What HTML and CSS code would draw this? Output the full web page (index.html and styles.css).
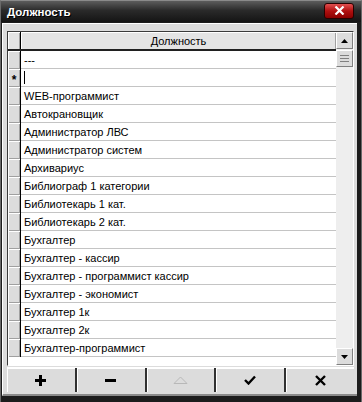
FILE: index.html
```html
<!DOCTYPE html>
<html lang="ru">
  <head>
    <meta charset="UTF-8" />
    <title>Должность</title>
    <link rel="stylesheet" href="styles.css">
  </head>
  <body>
    <div class="window">
      <div class="titlebar">
        <span class="title">Должность</span>
        <button class="close-btn" aria-label="Закрыть">
          <svg width="11" height="9" viewBox="0 0 11 9">
            <path d="M1.5 0.5 L9.5 8.5 M9.5 0.5 L1.5 8.5" stroke="#fff" stroke-width="2.2" />
          </svg>
        </button>
      </div>

      <div class="content">
        <div class="grid">
          <div class="table">
            <div class="row header">
              <div class="ind"></div>
              <div class="cell">Должность</div>
            </div>
            <div class="rows">
              <div class="row"><div class="ind"></div><div class="cell">---</div></div>
              <div class="row"><div class="ind star">*</div><div class="cell"><span class="caret"></span></div></div>
              <div class="row"><div class="ind"></div><div class="cell">WEB-программист</div></div>
              <div class="row"><div class="ind"></div><div class="cell">Автокрановщик</div></div>
              <div class="row"><div class="ind"></div><div class="cell">Администратор ЛВС</div></div>
              <div class="row"><div class="ind"></div><div class="cell">Администратор систем</div></div>
              <div class="row"><div class="ind"></div><div class="cell">Архивариус</div></div>
              <div class="row"><div class="ind"></div><div class="cell">Библиограф 1 категории</div></div>
              <div class="row"><div class="ind"></div><div class="cell">Библиотекарь 1 кат.</div></div>
              <div class="row"><div class="ind"></div><div class="cell">Библиотекарь 2 кат.</div></div>
              <div class="row"><div class="ind"></div><div class="cell">Бухгалтер</div></div>
              <div class="row"><div class="ind"></div><div class="cell">Бухгалтер - кассир</div></div>
              <div class="row"><div class="ind"></div><div class="cell">Бухгалтер - программист кассир</div></div>
              <div class="row"><div class="ind"></div><div class="cell">Бухгалтер - экономист</div></div>
              <div class="row"><div class="ind"></div><div class="cell">Бухгалтер 1к</div></div>
              <div class="row"><div class="ind"></div><div class="cell">Бухгалтер 2к</div></div>
              <div class="row"><div class="ind"></div><div class="cell">Бухгалтер-программист</div></div>
            </div>
          </div>

          <div class="scrollbar">
            <div class="sb-btn">
              <svg width="7" height="4" viewBox="0 0 7 4"><path d="M0 4 L3.5 0 L7 4 Z" fill="#000" /></svg>
            </div>
            <div class="sb-thumb">
              <svg width="9" height="7" viewBox="0 0 9 7">
                <path d="M0 0.5 H9 M0 3.5 H9 M0 6.5 H9" stroke="#808080" stroke-width="1" />
              </svg>
            </div>
            <div class="sb-track"></div>
            <div class="sb-btn">
              <svg width="7" height="4" viewBox="0 0 7 4"><path d="M0 0 L7 0 L3.5 4 Z" fill="#000" /></svg>
            </div>
          </div>
        </div>

        <div class="toolbar">
          <button class="tool">
            <svg width="11" height="11" viewBox="0 0 11 11"><path d="M5.5 0 V11 M0 5.5 H11" stroke="#000" stroke-width="3" /></svg>
          </button>
          <button class="tool">
            <svg width="11" height="3" viewBox="0 0 11 3"><path d="M0 1.5 H11" stroke="#000" stroke-width="3" /></svg>
          </button>
          <button class="tool" disabled>
            <svg width="15" height="8" viewBox="0 0 15 8"><path d="M1 7.5 L7.5 1 L14 7.5 Z" fill="none" stroke="#b8b8b8" stroke-width="1" /></svg>
          </button>
          <button class="tool">
            <svg width="12" height="10" viewBox="0 0 12 10"><path d="M1 5 L4.5 8.5 L11 1.5" fill="none" stroke="#000" stroke-width="2.4" /></svg>
          </button>
          <button class="tool">
            <svg width="11" height="11" viewBox="0 0 11 11"><path d="M1 1 L10 10 M10 1 L1 10" stroke="#000" stroke-width="2.4" /></svg>
          </button>
        </div>
      </div>
    </div>
  </body>
</html>
```

FILE: styles.css
```css
:root {
  --frame: #1c1c1c;
  --face: #dcdcdc;
  --line: #c4c4c4;
  --dark: #3a3a3a;
}
* {
  box-sizing: border-box;
}
body {
  margin: 0;
  background: #000;
  font-family: "Liberation Sans", Arial, sans-serif;
  font-size: 11px;
}
.window {
  width: 362px;
  height: 402px;
  background: var(--frame);
  border-left: 1px solid #6a6a6a;
  border-right: 1px solid #6a6a6a;
  border-top: 1px solid #8a8a8a;
  display: flex;
  flex-direction: column;
}
.titlebar {
  height: 23px;
  display: flex;
  align-items: center;
  justify-content: space-between;
  padding: 0 7px 0 6px;
  background: linear-gradient(#5c5c5c, #2a2a2a 45%, #141414);
}
.title {
  color: #fff;
  font-weight: bold;
  font-size: 11.5px;
  text-shadow: 1px 1px 0 #000;
}
.close-btn {
  width: 30px;
  height: 16px;
  margin-top: -2px;
  border: 1px solid #2a0000;
  border-radius: 3px;
  background: linear-gradient(#e25050, #b01010 50%, #8c0000);
  display: flex;
  align-items: center;
  justify-content: center;
  padding: 0;
}
.content {
  flex: 1;
  margin: 1px 4px 6px 1px;
  background: var(--face);
  border-top: 1px solid #fff;
  border-left: 1px solid #fff;
  padding: 7px 3px 2px 4px;
  display: flex;
  flex-direction: column;
  border-bottom: 2px solid #8a8a8a;
}
.grid {
  display: flex;
  height: 335px;
  border: 1px solid var(--dark);
  border-right-color: #fff;
  border-bottom-color: #fff;
  background: #fff;
}
.table {
  flex: 1;
  display: flex;
  flex-direction: column;
  overflow: hidden;
}
.row {
  display: flex;
  height: 18px;
  flex-shrink: 0;
}
.ind {
  width: 13px;
  border-right: 1px solid #000;
  background: var(--face);
  box-shadow: inset 1px 1px 0 #fff, inset -1px -1px 0 #a0a0a0;
  display: flex;
  align-items: center;
  justify-content: center;
}
.star {
  font-size: 12px;
  font-weight: bold;
  padding-top: 4px;
}
.cell {
  flex: 1;
  border-bottom: 1px solid var(--line);
  padding: 0 0 0 3px;
  display: flex;
  align-items: center;
  color: #000;
}
.header {
  height: 19px;
  border-bottom: 2px solid #202020;
}
.header .ind,
.header .cell {
  background: #e4e4e4;
  box-shadow: inset 1px 1px 0 #fff, inset -1px 0 0 #a0a0a0;
}
.header .cell {
  justify-content: center;
  border-bottom: none;
  padding: 0;
}
.caret {
  width: 1px;
  height: 13px;
  background: #000;
}
.scrollbar {
  width: 17px;
  display: flex;
  flex-direction: column;
  background: #eeeeee;
}
.sb-btn,
.sb-thumb {
  height: 17px;
  background: var(--face);
  border: 1px solid;
  border-color: #fff #808080 #808080 #fff;
  display: flex;
  align-items: center;
  justify-content: center;
}
.sb-thumb {
  margin-top: 1px;
}
.sb-track {
  flex: 1;
}
.toolbar {
  display: flex;
  height: 25px;
  margin-top: 1px;
  border-top: 1px solid #fff;
}
.tool {
  flex: 1;
  background: var(--face);
  border: none;
  border-right: 2px solid #303030;
  box-shadow: inset 1px 1px 0 #fff;
  display: flex;
  align-items: center;
  justify-content: center;
  padding: 0;
}
.tool:last-child {
  border-right: none;
}
```
